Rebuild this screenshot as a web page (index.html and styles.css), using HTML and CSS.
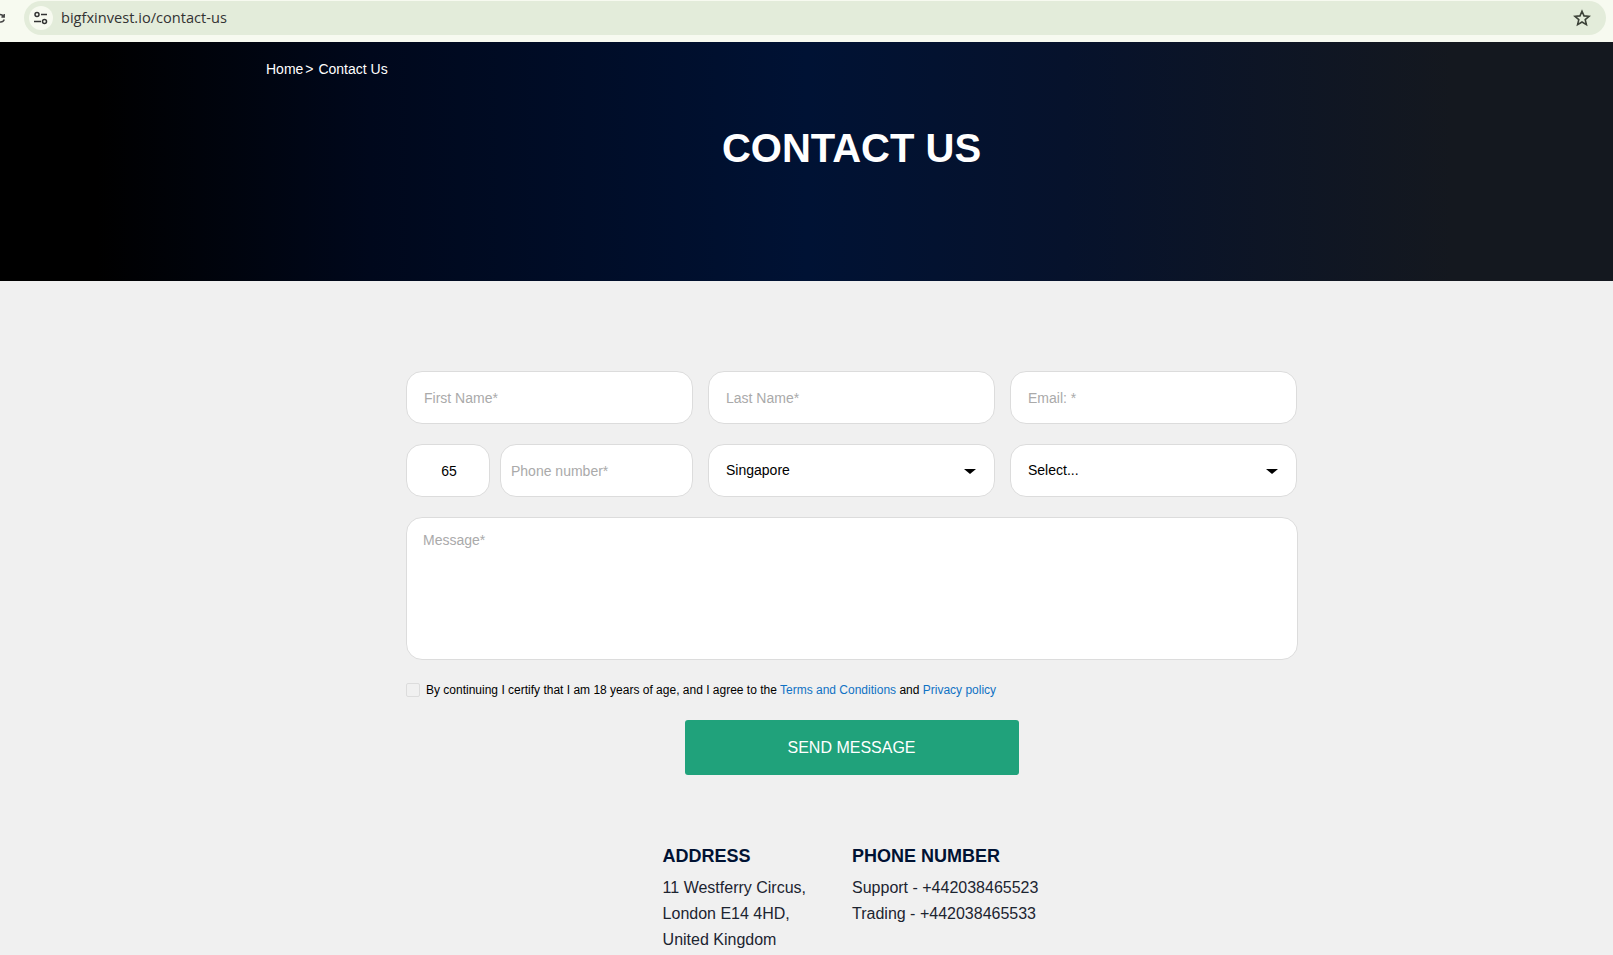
FILE: index.html
```html
<!DOCTYPE html>
<html lang="en">
<head>
    <meta charset="UTF-8">
    <title>Contact Us</title>
    <link rel="stylesheet" href="styles.css">
</head>
<body>
    <div class="browser-bar">
        <svg class="reload" width="6" height="14" viewBox="0 0 6 14"><path d="M0 3.5a4 4 0 0 1 3.5 2M4.2 3v3H1.4M4.3 8.5A4 4 0 0 1 0 11" fill="none" stroke="#444" stroke-width="1.5"/></svg>
        <div class="omnibox">
            <span class="site-info">
                <svg width="16" height="14" viewBox="0 0 16 14"><circle cx="4" cy="3.5" r="2" fill="none" stroke="#333" stroke-width="1.5"/><path d="M8 3.5h6M1 10.5h7" stroke="#333" stroke-width="1.6"/><circle cx="11.5" cy="10.5" r="2" fill="none" stroke="#333" stroke-width="1.5"/></svg>
            </span>
            <span class="url">bigfxinvest.io/contact-us</span>
            <svg class="star" width="18" height="18" viewBox="0 0 18 18"><path d="M9 2.2l2 4.7 5.1.4-3.9 3.3 1.2 5L9 13l-4.4 2.6 1.2-5-3.9-3.3 5.1-.4z" fill="none" stroke="#3c4238" stroke-width="1.6"/></svg>
        </div>
    </div>

    <header class="banner">
        <p class="breadcrumb">Home<span class="sep">&gt;</span> Contact Us</p>
        <h1>CONTACT US</h1>
    </header>

    <main class="content">
        <form class="contact-form" action="#" method="get">
            <div class="form-row">
                <input class="field" type="text" placeholder="First Name*">
                <input class="field" type="text" placeholder="Last Name*">
                <input class="field" type="text" placeholder="Email: *">
            </div>
            <div class="form-row">
                <div class="phone-group">
                    <input class="field code" type="text" value="65">
                    <input class="field phone" type="text" placeholder="Phone number*">
                </div>
                <div class="select-wrap">
                    <select class="field"><option>Singapore</option></select>
                </div>
                <div class="select-wrap">
                    <select class="field"><option>Select...</option></select>
                </div>
            </div>
            <textarea class="field message" placeholder="Message*"></textarea>
            <label class="agree">
                <input type="checkbox">
                <span>By continuing I certify that I am 18 years of age, and I agree to the <a href="#">Terms and Conditions</a> and <a href="#">Privacy policy</a></span>
            </label>
            <button class="send" type="submit">SEND MESSAGE</button>
        </form>

        <section class="info">
            <div class="info-col">
                <h2>ADDRESS</h2>
                <p>11 Westferry Circus,</p>
                <p>London E14 4HD,</p>
                <p>United Kingdom</p>
            </div>
            <div class="info-col">
                <h2>PHONE NUMBER</h2>
                <p>Support - +442038465523</p>
                <p>Trading - +442038465533</p>
            </div>
        </section>
    </main>
</body>
</html>
```

FILE: styles.css
```css
* {
    box-sizing: border-box;
}
html, body {
    height: 955px;
    overflow: hidden;
}
body {
    font-family: "Liberation Sans", Arial, sans-serif;
    margin: 0;
    padding: 0;
    background-color: #f0f0f0;
    color: #000;
}

/* Barra del navegador */
.browser-bar {
    display: flex;
    align-items: flex-start;
    height: 42px;
    padding: 1px 7px 0 0;
    background-color: #f7faf0;
}
.reload {
    flex: none;
    margin: 10px 18px 0 0;
}
.omnibox {
    flex: 1;
    display: flex;
    align-items: center;
    height: 34px;
    padding: 0 15px 0 5px;
    border-radius: 17px;
    background-color: #e3ecda;
}
.site-info {
    display: flex;
    align-items: center;
    justify-content: center;
    width: 24px;
    height: 24px;
    margin-right: 8px;
    border-radius: 50%;
    background-color: #f7faf0;
}
.url {
    flex: 1;
    padding-bottom: 2px;
    font-family: "Open Sans", sans-serif;
    font-size: 14.6px;
    color: #333;
}

/* Cabecera */
.banner {
    height: 239px;
    padding: 18px 0 0 266px;
    background: linear-gradient(90deg, #000 6%, #00081c 23%, #001234 50%, #06122c 66%, #14181f 90%);
    color: #fff;
}
.breadcrumb {
    margin: 0;
    font-size: 14px;
    line-height: 18px;
}
.sep {
    margin: 0 1px 0 2px;
}
.banner h1 {
    margin: 47px 0 0 -176px;
    font-size: 40px;
    line-height: 46px;
    font-weight: bold;
    text-align: center;
}

/* Formulario */
.content {
    padding: 90px 0 0 90px;
}
.contact-form {
    display: flex;
    flex-direction: column;
    width: 891px;
    margin: 0 auto;
}
.form-row {
    display: grid;
    grid-template-columns: repeat(3, 287px);
    column-gap: 15px;
    margin-bottom: 20px;
}
.field {
    width: 100%;
    height: 53px;
    padding: 0 17px;
    border: 1px solid #dcdcdc;
    border-radius: 16px;
    background-color: #fff;
    font-family: "Liberation Sans", Arial, sans-serif;
    font-size: 14px;
    color: #000;
    outline: none;
}
.field::placeholder {
    color: #aaa;
    opacity: 1;
}
.phone-group {
    display: flex;
    gap: 10px;
}
.code {
    flex: none;
    width: 84px;
    padding: 0 0 0 2px;
    text-align: center;
}
.phone {
    flex: 1;
    min-width: 0;
    padding: 0 10px;
}
.select-wrap {
    position: relative;
}
.select-wrap select {
    appearance: none;
    padding-bottom: 2px;
}
.select-wrap::after {
    content: "";
    position: absolute;
    top: 25px;
    right: 19px;
    border-top: 5px solid #000;
    border-left: 6px solid transparent;
    border-right: 6px solid transparent;
    pointer-events: none;
}
.message {
    display: block;
    width: 892px;
    height: 143px;
    padding: 14px 16px;
    resize: none;
}
.agree {
    display: flex;
    align-items: center;
    margin-top: 23px;
    font-size: 12px;
    line-height: 14px;
}
.agree input {
    appearance: none;
    flex: none;
    width: 14px;
    height: 14px;
    margin: 0 6px 0 0;
    border: 1px solid #dcdcdc;
    border-radius: 2px;
    background-color: #f0f0f0;
}
.agree a {
    color: #0f72c4;
    text-decoration: none;
}
.send {
    align-self: center;
    width: 334px;
    height: 55px;
    margin-top: 23px;
    border: none;
    border-radius: 3px;
    background-color: #20a27b;
    color: #fff;
    font-family: "Liberation Sans", Arial, sans-serif;
    font-size: 16px;
}

/* Datos de contacto */
.info {
    display: flex;
    justify-content: center;
    gap: 46px;
    margin-top: 71px;
    padding-right: 2px;
}
.info h2 {
    margin: 0 0 9px;
    font-size: 18px;
    line-height: 20px;
    color: #001233;
}
.info p {
    margin: 0;
    font-size: 16px;
    line-height: 26px;
    color: #1c2430;
}
```
